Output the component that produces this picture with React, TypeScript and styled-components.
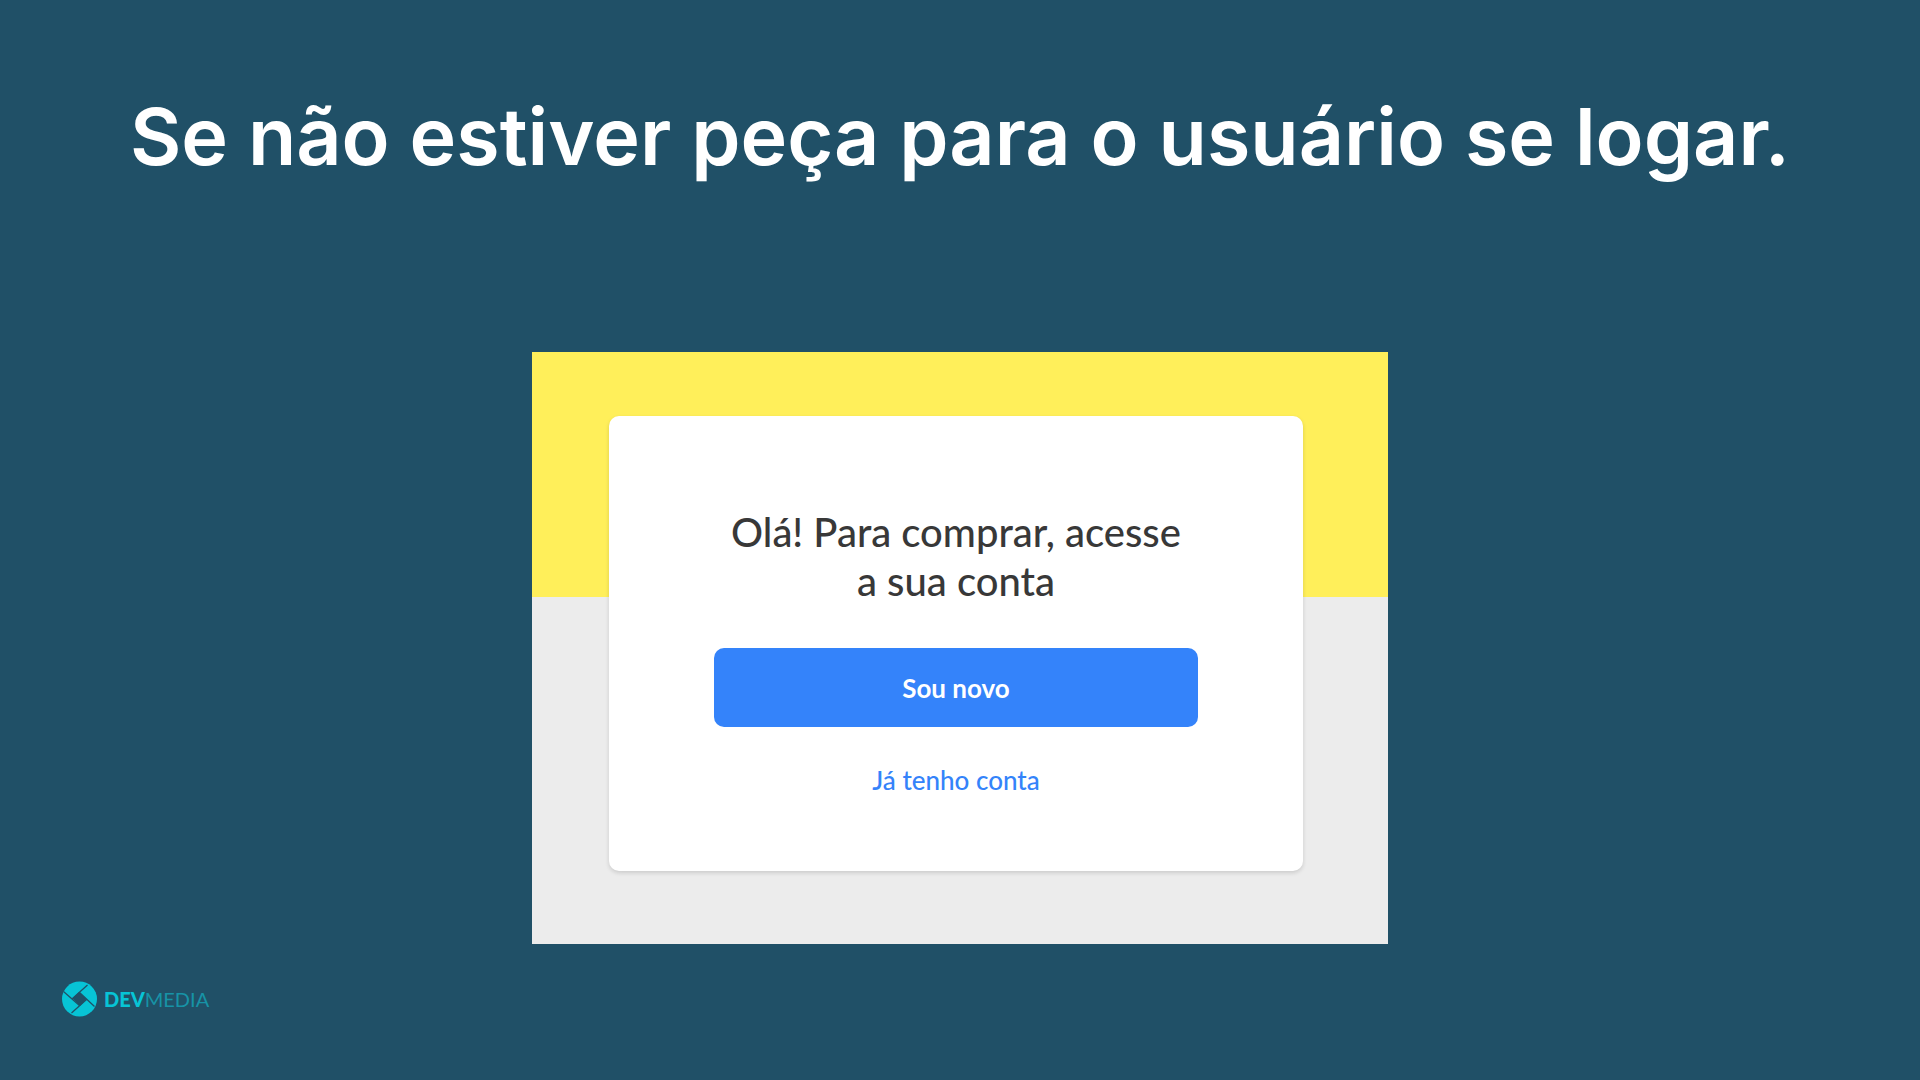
import React from "react";
import styled, { createGlobalStyle } from "styled-components";

const GlobalStyle = createGlobalStyle`
  *, *::before, *::after { box-sizing: border-box; }
  body { margin: 0; background: #205067; }
`;

const Slide = styled.main`
  min-height: 100vh;
  display: flex;
  flex-direction: column;
  align-items: center;
  padding: 90px 60px 60px;
  background: #205067;
`;

const Title = styled.h1`
  margin: 0 0 170px;
  color: #fff;
  font: 600 79px/92px Inter, "Open Sans", sans-serif;
  text-align: center;
`;

const Preview = styled.section`
  width: 100%;
  max-width: 856px;
  padding: 64px 85px 73px 77px;
  background: linear-gradient(#ffef5a 245px, #ececec 245px);
`;

const Card = styled.div`
  display: flex;
  flex-direction: column;
  align-items: center;
  padding: 92px 105px 75px;
  border-radius: 10px;
  background: #fff;
  box-shadow: 0 2px 4px rgba(0, 0, 0, 0.14);
`;

const Question = styled.h2`
  margin: 0 0 42px;
  color: #383838;
  font: 500 40px/49px "Lato Medium", Lato, sans-serif;
  text-align: center;
`;

const PrimaryButton = styled.button`
  width: 100%;
  height: 79px;
  border: 0;
  border-radius: 10px;
  background: #3483fa;
  color: #fff;
  font: 700 26px/32px Lato, sans-serif;
  cursor: pointer;
`;

const AccountLink = styled.a`
  margin-top: 37px;
  color: #3483fa;
  font: 500 26px/32px "Lato Medium", Lato, sans-serif;
  text-decoration: none;
`;

const Brand = styled.footer`
  align-self: flex-start;
  display: flex;
  align-items: center;
  gap: 6px;
  margin-top: 36px;
  color: #07c4d6;
  font: 400 20px/36px Lato, sans-serif;
`;

const BrandMark = styled.svg`
  display: block;
  width: 38px;
  height: 38px;
`;

const BrandStrong = styled.strong`
  font-weight: 900;
`;

const BrandLight = styled.span`
  color: #1793a6;
`;

export default function App() {
  return (
    <>
      <GlobalStyle />
      <Slide>
        <Title>Se não estiver peça para o usuário se logar.</Title>
        <Preview>
          <Card>
            <Question>
              Olá! Para comprar, acesse
              <br />a sua conta
            </Question>
            <PrimaryButton type="button">Sou novo</PrimaryButton>
            <AccountLink href="#conta">Já tenho conta</AccountLink>
          </Card>
        </Preview>
        <Brand>
          <BrandMark viewBox="0 0 38 38" aria-hidden="true">
            <circle cx="19.5" cy="19" r="17.5" fill="#07c4d6" />
            <path d="M19 12 26.500 19 20 26 12.500 18.500Z" fill="#205067" />
            <path d="M12.500 18.500 27.500 5M19 12 34.500 26.500M26.500 19.500 11.500 33M20 26 3.500 11.500" stroke="#205067" strokeWidth="1.3" />
          </BrandMark>
          <span>
            <BrandStrong>DEV</BrandStrong>
            <BrandLight>MEDIA</BrandLight>
          </span>
        </Brand>
      </Slide>
    </>
  );
}
